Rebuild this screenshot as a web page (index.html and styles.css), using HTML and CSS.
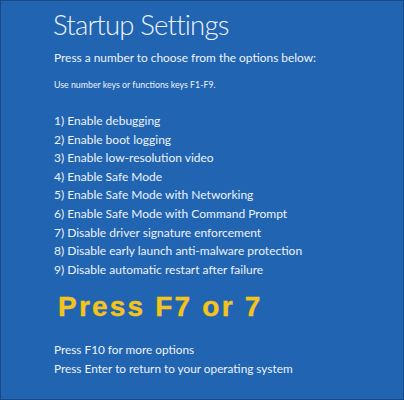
FILE: index.html
```html
<!DOCTYPE html>
<html>
<head>
<meta charset="utf-8">
<link rel="stylesheet" href="styles.css">
</head>
<body>
<div class="screen">
  <h1 class="title">Startup Settings</h1>
  <p class="lead">Press a number to choose from the options below:</p>
  <p class="hint">Use number keys or functions keys F1-F9.</p>
  <ol class="options">
    <li>1) Enable debugging</li>
    <li>2) Enable boot logging</li>
    <li>3) Enable low-resolution video</li>
    <li>4) Enable Safe Mode</li>
    <li>5) Enable Safe Mode with Networking</li>
    <li>6) Enable Safe Mode with Command Prompt</li>
    <li>7) Disable driver signature enforcement</li>
    <li>8) Disable early launch anti-malware protection</li>
    <li>9) Disable automatic restart after failure</li>
  </ol>
  <p class="callout">Press F7 or 7</p>
  <div class="footer">
    <p>Press F10 for more options</p>
    <p>Press Enter to return to your operating system</p>
  </div>
</div>
</body>
</html>
```

FILE: styles.css
```css
html, body {
  margin: 0;
  padding: 0;
}
body {
  width: 404px;
  height: 400px;
  background: #1f65b2;
}
.screen {
  box-sizing: border-box;
  width: 404px;
  height: 400px;
  border: 1px solid #184a86;
  background: #2064b2;
  padding: 6px 0 0 52px;
  color: #eef3fb;
  font-family: Lato, "Open Sans", sans-serif;
}
.title {
  margin: 0;
  font-weight: 300;
  font-size: 27.5px;
  line-height: 36px;
  letter-spacing: -0.8px;
}
.lead {
  margin: 6px 0 0 1px;
  font-size: 11.9px;
  line-height: 18px;
}
.hint {
  margin: 12px 0 0 1px;
  font-size: 8.8px;
  line-height: 12px;
}
.options {
  list-style: none;
  margin: 21px 0 0 1px;
  padding: 0;
  font-size: 12px;
  line-height: 18.6px;
}
.callout {
  margin: 12px 0 0 5px;
  font-family: "Liberation Sans", Arial, sans-serif;
  font-weight: 700;
  font-size: 28px;
  line-height: 32px;
  letter-spacing: 2.2px;
  color: #f5c41c;
  -webkit-text-stroke: 0.4px #f5c41c;
}
.footer {
  margin: 18px 0 0 1px;
  font-size: 11.8px;
  line-height: 18.6px;
}
.footer p {
  margin: 0;
}
```
